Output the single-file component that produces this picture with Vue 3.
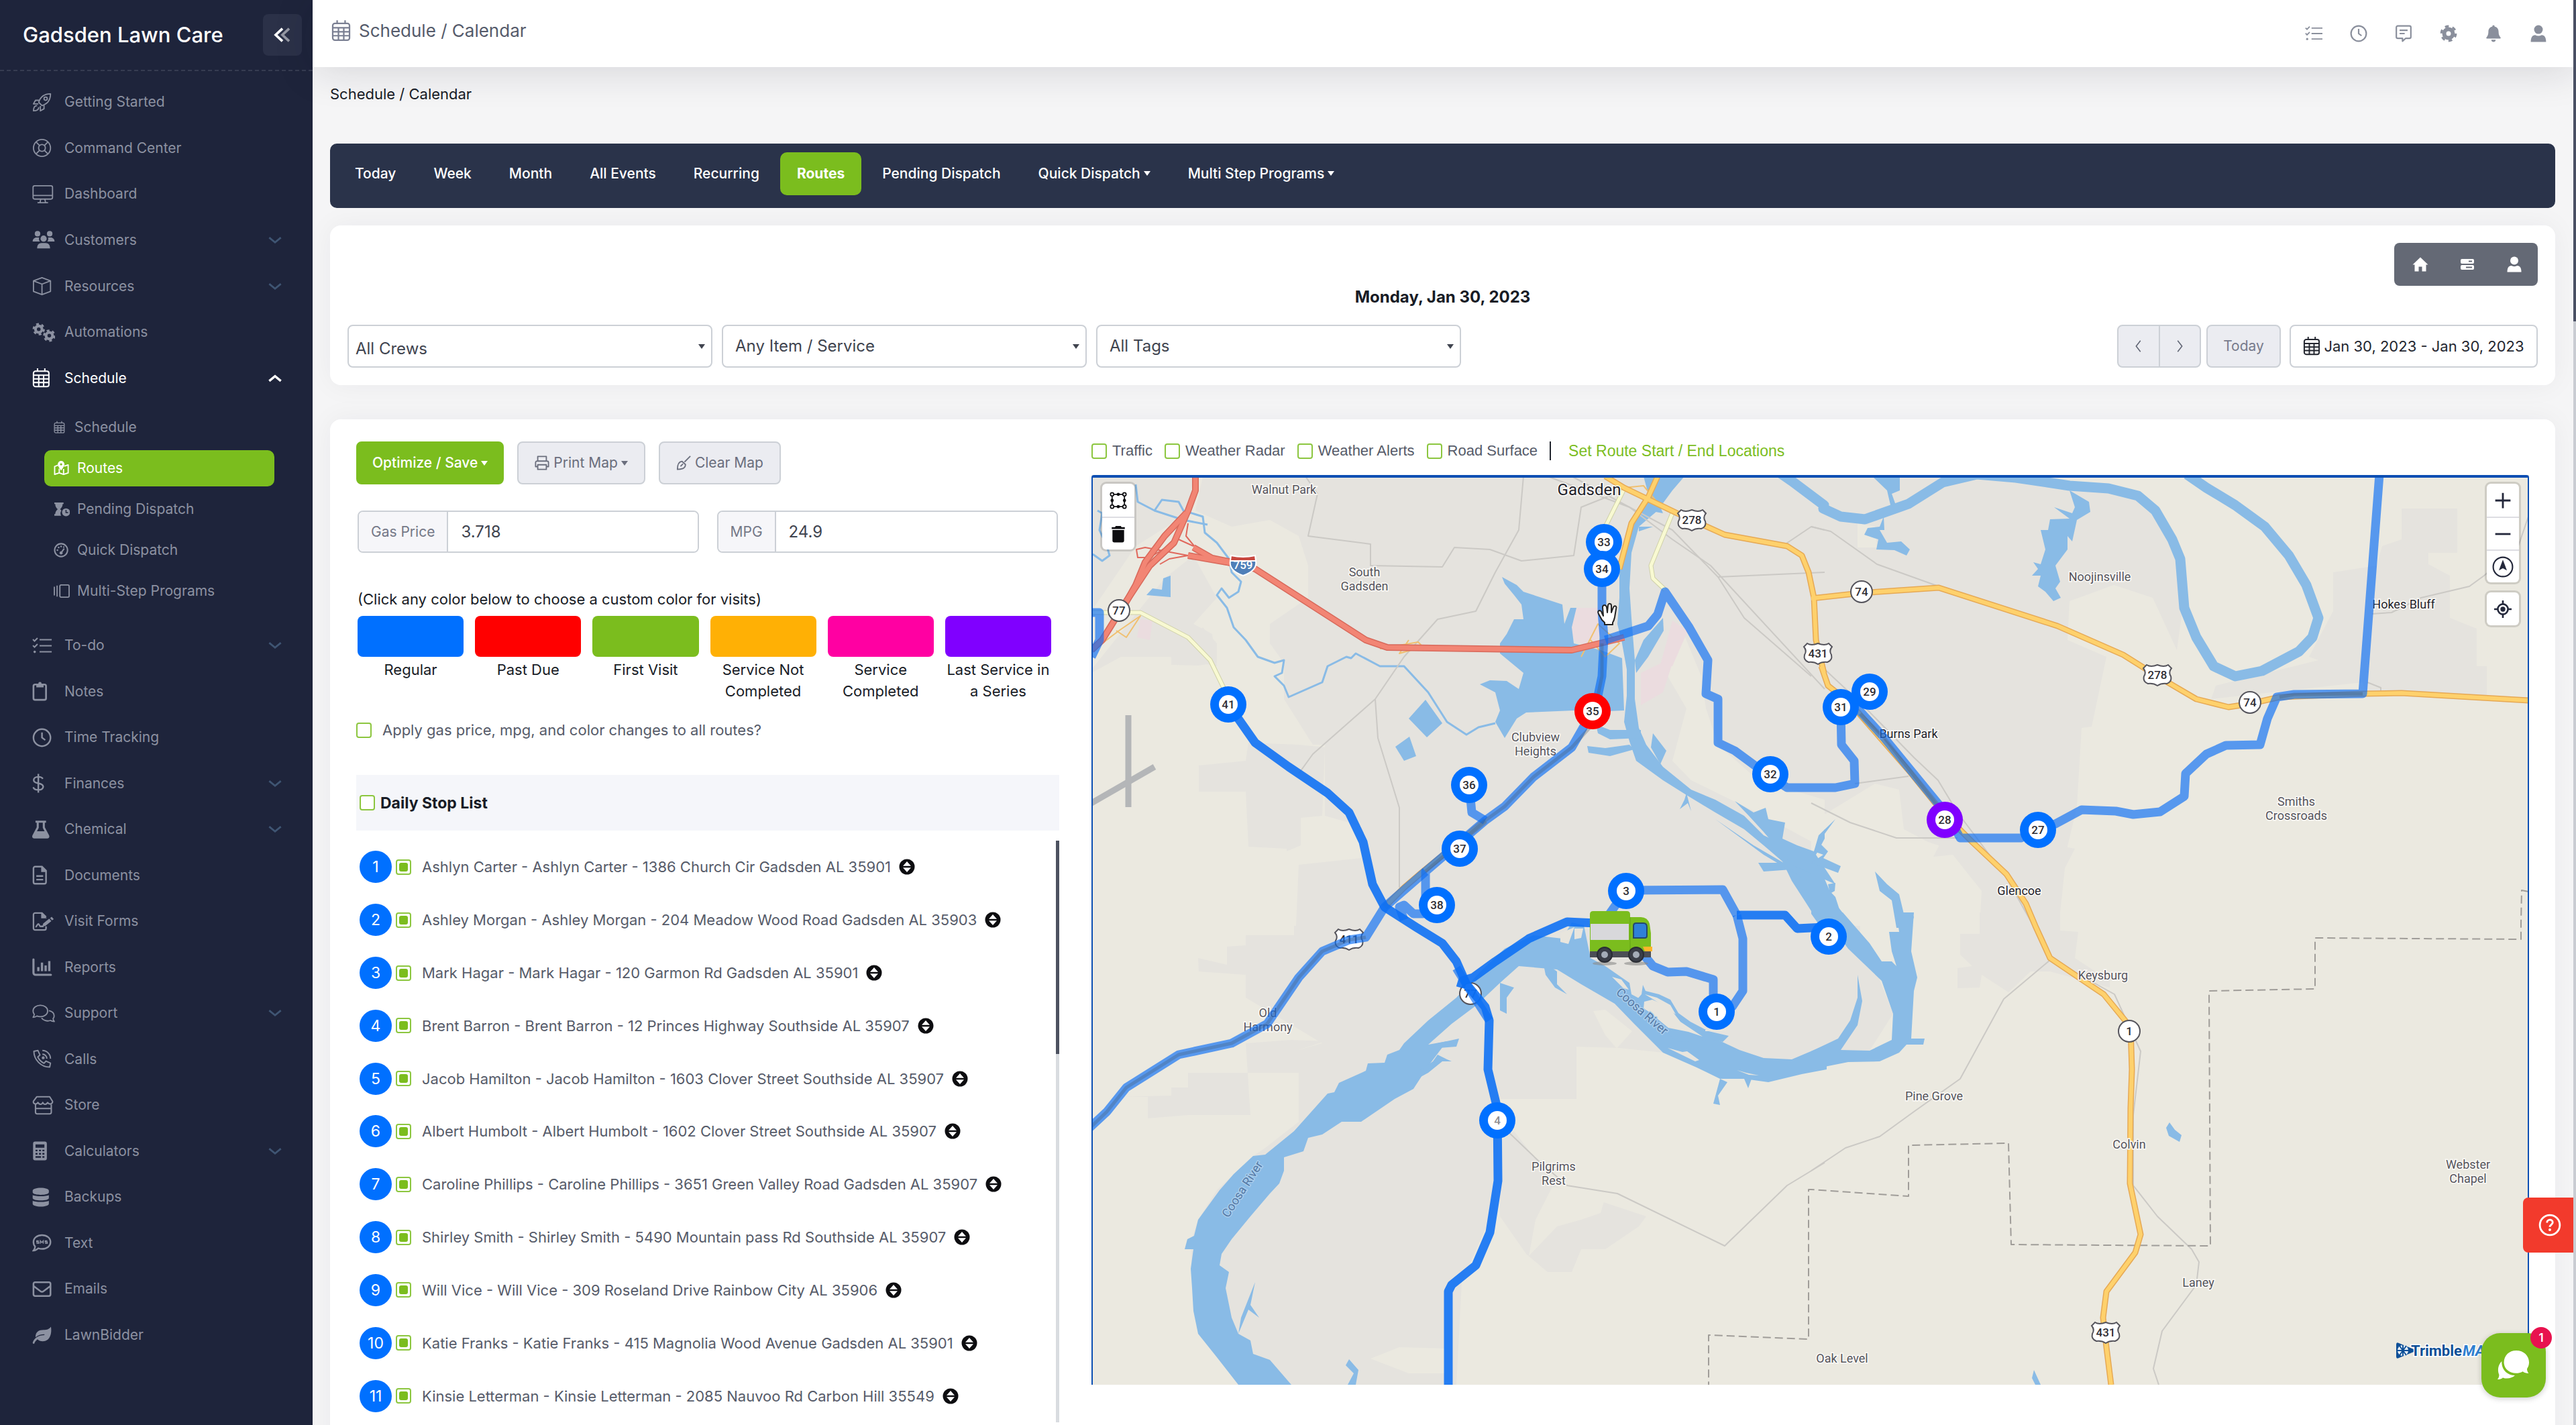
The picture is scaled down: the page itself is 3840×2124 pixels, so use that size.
<script setup>
import { ref } from 'vue'

const icons = {
  rocket: '<g fill="none" stroke="currentColor" stroke-width="1.5" stroke-linejoin="round"><path d="M8 12C10 5 15 1.500 22.500 1.500 22.500 9 19 14 12 16Z"/><circle cx="16.500" cy="7.500" r="2"/><path d="M8.500 9.500H4L1.500 14H7.500M14.500 15.500V20L10 22.500V16.500M6 16C3 16 1.500 18.500 1.500 22.500 5.500 22.500 8 21 8 18"/></g>',
  life: '<g fill="none" stroke="currentColor" stroke-width="1.500"><circle cx="12" cy="12" r="10.500"/><circle cx="12" cy="12" r="4.200"/><path d="M4.500 4.500 9 9M15 15l4.500 4.500M19.500 4.500 15 9M9 15l-4.500 4.500"/></g>',
  desktop: '<g fill="none" stroke="currentColor" stroke-width="1.500" stroke-linejoin="round"><rect x="1" y="1.500" width="24" height="16.500" rx="2"/><path d="M1 13.500h24M10.500 18l-1 4.500M15.500 18l1 4.500M6.500 22.500h13"/></g>',
  users: '<g fill="currentColor"><circle cx="6.500" cy="4.500" r="3.400"/><circle cx="21.500" cy="4.500" r="3.400"/><circle cx="14" cy="10.500" r="3.800"/><path d="M.5 14c0-3 2-5 5-5h3c-.6 2 0 4 1 5ZM27.500 14c0-3-2-5-5-5h-3c.6 2 0 4-1 5ZM6 22.500c0-4 2-6.500 5.500-6.500h5c3.500 0 5.500 2.500 5.500 6.500Z"/></g>',
  box: '<path d="M12 1.500 22.500 5.500V18.500L12 22.500 1.500 18.500V5.500ZM1.500 5.500 12 9.500 22.500 5.500M12 9.500V22.500" fill="none" stroke="currentColor" stroke-width="1.500" stroke-linejoin="round"/>',
  gears: '<g fill="none" stroke="currentColor"><circle cx="8" cy="8" r="4" stroke-width="3.400"/><circle cx="8" cy="8" r="6.400" stroke-width="2.400" stroke-dasharray="3.350 3.350"/><circle cx="21" cy="16" r="4" stroke-width="3.400"/><circle cx="21" cy="16" r="6.400" stroke-width="2.400" stroke-dasharray="3.350 3.350"/></g>',
  calendar: '<g fill="none" stroke="currentColor" stroke-width="1.700"><rect x="1.500" y="3.500" width="19" height="19" rx="2.500"/><path d="M1.500 8.500h19M1.500 13h19M1.500 17.500h19M8 8.500v14M14 8.500v14M6.500 0v4M15.500 0v4"/></g>',
  map: '<g fill="none" stroke="currentColor" stroke-width="2" stroke-linejoin="round"><path d="M7 7 1.500 9V22L9 19.500 16 22 23.500 19.500V6.500L17 8.500M9 12.500V19.500M16 13V22"/></g><path d="M12 0a5.500 5.500 0 0 1 5.500 5.500C17.500 9 12 15.500 12 15.500S6.500 9 6.500 5.500A5.500 5.500 0 0 1 12 0Z" fill="currentColor"/><circle cx="12" cy="5.500" r="1.800" fill="#7bbd1e"/>',
  hourglass: '<path d="M1 1h15v2.500h-1.500C14.500 8 12 10 10.500 12c.8.800 1.500 1.500 2 2.500A7.500 7.500 0 0 0 12 22.500H1V20h1.500c0-4 2-6 4-8-2-2-4-4-4-8.500H1Z" fill="currentColor"/><circle cx="20" cy="17" r="6.500" fill="currentColor"/><path d="M20 13v4.500h3.500" stroke="#1e243b" stroke-width="1.600" fill="none"/>',
  gauge: '<g fill="none" stroke="currentColor" stroke-width="2.200"><circle cx="12" cy="12" r="10.500"/><path d="M12 16.500 17 9.500"/></g><g fill="currentColor"><circle cx="12" cy="16.500" r="2.500"/><circle cx="6" cy="12" r="1.400"/><circle cx="8" cy="7.700" r="1.400"/><circle cx="12" cy="6" r="1.400"/><circle cx="16.300" cy="7" r="1.200"/></g>',
  steps: '<g fill="none" stroke="currentColor" stroke-width="2"><rect x="10" y="2" width="15" height="20" rx="2"/><path d="M1 5v14M5.500 3v18"/></g>',
  tasks: '<g fill="none" stroke="currentColor" stroke-width="1.700"><path d="M9 4.500h15M9 12h15M9 19.500h15M.8 4.200l2 2L6.500 2.500M.8 11.700l2 2L6.500 10"/></g><circle cx="3" cy="19.500" r="1.500" fill="currentColor"/>',
  clipboard: '<rect x="1.500" y="3.500" width="15.500" height="19" rx="2" fill="none" stroke="currentColor" stroke-width="2.200"/><path d="M5 2.500h2.500a2 2 0 0 1 4 0H14V7H5Z" fill="currentColor"/>',
  clock: '<g fill="none" stroke="currentColor" stroke-width="2"><circle cx="12" cy="12" r="10.500"/><path d="M12 5.500V12l4 3"/></g>',
  dollar: '<path d="M13 6.500C12 4.500 10 4 7.500 4 4 4 1.800 5.500 1.800 8S4 11.300 7.500 12s6 1.700 6 4.200S11 20.200 7.500 20.200 2 19 1.200 16.800M7.500 .5v23" fill="none" stroke="currentColor" stroke-width="2"/>',
  flask: '<path d="M4 1h13v2.500h-1.500V9l5.200 10c1 2-.2 4-2.200 4h-16C.5 23-.7 21 .3 19L5.500 9V3.500H4ZM8 3.500V10l-2.200 4h9.400L13 10V3.500Z" fill="currentColor" fill-rule="evenodd"/>',
  doc: '<path d="M1.500 3.500a2 2 0 0 1 2-2H12L17 6.500V20.500a2 2 0 0 1-2 2H3.500a2 2 0 0 1-2-2ZM5 13h8.500M5 17.500h8.500" fill="none" stroke="currentColor" stroke-width="2"/><path d="M11 1v7h7Z" fill="currentColor"/>',
  sign: '<path d="M17 18V20.500a2 2 0 0 1-2 2H3.500a2 2 0 0 1-2-2V3.500a2 2 0 0 1 2-2H12L17 6.500M4 18.500c2 0 2-3.500 3.500-3.500s1 3 2.500 3H14" fill="none" stroke="currentColor" stroke-width="1.900"/><path d="M11 1v7h7ZM12.500 18 13.500 14.500 21 8.500 23.500 11.500 16 17.500ZM22 7.800 24 6.200 26.500 9 24.500 10.600Z" fill="currentColor"/>',
  chart: '<path d="M1.500 2.500V19a2.500 2.500 0 0 0 2.500 2.500H23" fill="none" stroke="currentColor" stroke-width="2.600" stroke-linecap="round"/><path d="M7.500 12v5M12 6.500V17M16.500 10v7M21 4.500V17" stroke="currentColor" stroke-width="2.800"/>',
  chats: '<g fill="none" stroke="currentColor" stroke-width="1.500" stroke-linejoin="round"><path d="M10 2C15 2 19 5 19 9s-4 7-9 7c-1.500 0-3-.3-4.200-.8C4.500 16.200 3 16.800 1 16.800 2 15.500 2.500 14.500 2.500 13 1.500 11.800 1 10.500 1 9 1 5 5 2 10 2Z"/><path d="M20.500 8.500c4 .8 6.500 3.300 6.500 6.500 0 1.500-.5 2.500-1.300 3.500 0 1.500.6 2.500 1.500 3.500-2 0-3.500-.5-4.700-1.300-4.500 1.500-9 0-11-3.200"/></g>',
  phone: '<g fill="none" stroke="currentColor" stroke-width="1.600" stroke-linejoin="round"><path d="M2 2.500 7 1.500 9.500 7 6.800 9.500C8.500 13 11 15.500 14.500 17.200L17 14.500 22.500 17 21.500 22C11 22 2 13 2 2.500Z"/><path d="M12.500 1.500C18 1.500 22.500 6 22.500 11.500M12.500 6c3 0 5.500 2.500 5.500 5.500"/><circle cx="13.500" cy="10.500" r="1"/></g>',
  store: '<g fill="none" stroke="currentColor" stroke-width="1.700" stroke-linejoin="round"><path d="M5.500 1.500h16L25 7c.5 3-4 5-6 1.500-1.500 3-5 3-6 0-1 3-4.500 3-6 0C5 12 .5 10 1.500 7ZM4 11V20.500a2 2 0 0 0 2 2H21.500a2 2 0 0 0 2-2V11M4 16h19.500"/></g>',
  calc: '<path d="M3.500 .5h12a2.500 2.500 0 0 1 2.500 2.500v18a2.500 2.500 0 0 1-2.500 2.500h-12A2.500 2.500 0 0 1 1 21V3A2.500 2.500 0 0 1 3.500 .5ZM4 4v4h11V4ZM4 10.500v2h2.500v-2ZM8.300 10.500v2h2.500v-2ZM12.500 10.500v2H15v-2ZM4 14.500v2h2.500v-2ZM8.300 14.500v2h2.500v-2ZM12.500 14.500v2H15v-2ZM4 18.500v2h6.800v-2ZM12.500 18.500v2H15v-2Z" fill="currentColor" fill-rule="evenodd"/>',
  database: '<path d="M.5 4C.5 2 5 .5 10.500 .5S20.500 2 20.500 4V6c0 1.800-4.500 3-10 3S.5 7.800.5 6ZM.5 9.300c3 2 17 2 20 0V13c0 1.800-4.500 3-10 3S.5 14.800.5 13ZM.5 16.300c3 2 17 2 20 0V20c0 2-4.500 3.500-10 3.500S.5 22 .5 20Z" fill="currentColor"/>',
  sms: '<path d="M12 2.500C18 2.500 22.500 6 22.500 11S18 19.500 12 19.500c-1.700 0-3-.3-4.500-.8C5.500 20.500 3.500 21.500 1.500 21.500 3 19.500 3.500 18 3.500 16.500 2 15 1.500 13 1.500 11 1.500 6 6 2.500 12 2.500Z" fill="none" stroke="currentColor" stroke-width="2"/><path d="M8 9.500H5.500V11H8v1.700H5.200M10 13V9.500l1.800 2 1.800-2V13M18.500 9.500H16V11h2.500v1.700h-2.800" fill="none" stroke="currentColor" stroke-width="1.200"/>',
  mail: '<path d="M3.500 3.500h17a2 2 0 0 1 2 2v13a2 2 0 0 1-2 2h-17a2 2 0 0 1-2-2v-13a2 2 0 0 1 2-2ZM1.500 8l8.500 6.500c1.300 1 2.700 1 4 0L22.500 8" fill="none" stroke="currentColor" stroke-width="2.100"/>',
  leaf: '<path d="M23 2c1.500 8-1 18-10 18-3 0-5-.8-6.500-2.500C4.500 19 3 21 2.500 23 1.500 23.200.5 23 .5 22 2 16 8 12.500 15 12.500v-1.200C11 11.300 7 12.500 4 15 4 8.500 8 6 14 6 18.500 6 21 5 23 2Z" fill="currentColor"/>',
  note: '<g fill="none" stroke="currentColor" stroke-width="2" stroke-linejoin="round"><path d="M4 1.500h16a2 2 0 0 1 2 2v13a2 2 0 0 1-2 2h-5l-4.500 4v-4H4a2 2 0 0 1-2-2v-13a2 2 0 0 1 2-2Z"/><path d="M6.500 7.500h11M6.500 12h7"/></g>',
  gear: '<circle cx="12" cy="12" r="6" fill="none" stroke="currentColor" stroke-width="5.500"/><circle cx="12" cy="12" r="10" fill="none" stroke="currentColor" stroke-width="3" stroke-dasharray="5.240 5.240"/>',
  bell: '<path d="M12 0.500c1 0 1.500.7 1.500 1.700C17 3 19 5.500 19 9.500c0 4 1 6 2.500 7.500.8.900.3 2-.8 2H3.300c-1.100 0-1.600-1.100-.8-2C4 15.500 5 13.500 5 9.500 5 5.500 7 3 10.500 2.200 10.500 1.200 11 .5 12 .5ZM9 20.500h6c0 4-6 4-6 0Z" fill="currentColor"/>',
  user: '<circle cx="12" cy="6.500" r="6" fill="currentColor"/><path d="M1.500 23.500c0-6 2-9.500 6-9.500 3 1.500 6 1.500 9 0 4 0 6 3.500 6 9.500Z" fill="currentColor"/>',
  home: '<path d="M12 1.500 23.500 12.500H20.500V22.500H14.500V15.500H9.500V22.500H3.500V12.500H.5Z" fill="currentColor"/>',
  server: '<path d="M4 4h16a2 2 0 0 1 2 2v3a2 2 0 0 1-2 2H4a2 2 0 0 1-2-2V6a2 2 0 0 1 2-2ZM14 6.500v2h5v-2ZM4 13h16a2 2 0 0 1 2 2v3a2 2 0 0 1-2 2H4a2 2 0 0 1-2-2v-3a2 2 0 0 1 2-2ZM10 15.500v2h9v-2Z" fill="currentColor" fill-rule="evenodd"/>',
  printer: '<g fill="none" stroke="currentColor" stroke-width="2" stroke-linejoin="round"><path d="M5 9V1.500h14V9M5 18H1.500v-6.500A2.500 2.500 0 0 1 4 9h16a2.500 2.500 0 0 1 2.500 2.500V18H19M5 15h14v7.500H5Z"/></g>',
  brush: '<g fill="none" stroke="currentColor" stroke-width="2" stroke-linejoin="round"><path d="M23 1 13.500 10.500M9.500 9.500 15 14.500C15.500 19 12 22.500 2 22.500 2 17 3.500 10 9.500 9.500ZM7 17.500 11 13.500"/></g>',
  down: '<path d="M4 8.500 12 15 20 8.500" fill="none" stroke="currentColor" stroke-width="2.600"/>',
  up: '<path d="M4 15.500 12 9 20 15.500" fill="none" stroke="currentColor" stroke-width="3.200"/>',
  left: '<path d="M15 3 8 12 15 21" fill="none" stroke="currentColor" stroke-width="1.700"/>',
  right: '<path d="M9 3 16 12 9 21" fill="none" stroke="currentColor" stroke-width="1.700"/>',
  collapse: '<path d="M12 4.500 4 12 12 19.500" fill="none" stroke="currentColor" stroke-width="3"/><path d="M20 4.500 12 12 20 19.500" fill="none" stroke="currentColor" stroke-width="3" opacity=".5"/>',
  sort: '<circle cx="12" cy="12" r="11.500" fill="#0d0d10"/><path d="M12 4 18 10.800H6ZM12 20 18 13.200H6Z" fill="#fff"/>',
  select: '<g fill="none" stroke="#0d0d10" stroke-width="1.600"><path d="M6 3.500h12M6 20.500h12M3.500 6v12M20.500 6v12"/><circle cx="3.500" cy="3.500" r="2.300" fill="#fff"/><circle cx="20.500" cy="3.500" r="2.300" fill="#fff"/><circle cx="3.500" cy="20.500" r="2.300" fill="#fff"/><circle cx="20.500" cy="20.500" r="2.300" fill="#fff"/></g><g fill="#0d0d10"><circle cx="12" cy="3.500" r="2.200"/><circle cx="12" cy="20.500" r="2.200"/><circle cx="3.500" cy="12" r="2.200"/><circle cx="20.500" cy="12" r="2.200"/></g>',
  trash: '<path d="M8.500 1h7l1 1.500H21V5H3V2.500h4.500ZM4 6.500h16V21a2.500 2.500 0 0 1-2.500 2.500h-11A2.500 2.500 0 0 1 4 21Z" fill="#0d0d10"/>',
  plus: '<path d="M12 1.500v21M1.500 12h21" stroke="#23273a" stroke-width="2.600"/>',
  minus: '<path d="M1.500 12h21" stroke="#23273a" stroke-width="2.600"/>',
  compass: '<circle cx="12" cy="12" r="10.800" fill="none" stroke="#23273a" stroke-width="1.600"/><path d="M12 4 16.500 16 12 13.500 7.500 16Z" fill="#23273a"/>',
  locate: '<circle cx="12" cy="12" r="7" fill="none" stroke="#23273a" stroke-width="2.400"/><circle cx="12" cy="12" r="3.400" fill="#23273a"/><path d="M12 0v5M12 19v5M0 12h5M19 12h5" stroke="#23273a" stroke-width="2.400"/>',
  chat: '<path d="M14 1C19.500 1 23.500 4.800 23.500 9.800c0 2-.6 3.400-1.500 4.800 0 1.300.4 2.400 1.200 3.400-1.800 0-3.200-.5-4.400-1.400-6 3.400-14 0-14-6.800C4.800 4.800 8.500 1 14 1Z" fill="#fff"/><path d="M3.200 9C2.700 15 7 19.500 13 19.500c-2 2-6 3-9 1.700-1 .9-2.400 1.300-4 1.300.9-1.100 1.200-2.200 1.200-3.500C-.3 15.500.5 11.500 3.200 9Z" fill="#fff"/>',
  help: '<circle cx="12" cy="12" r="10.500" fill="none" stroke="#fff" stroke-width="2"/><path d="M9 9.500c0-4 6-4 6-.3 0 2.300-3 2.300-3 4.800" fill="none" stroke="#fff" stroke-width="2"/><circle cx="12" cy="17" r="1.400" fill="#fff"/>',
}

const topMenu = [
  ['rocket', 'Getting Started'], ['life', 'Command Center'], ['desktop', 'Dashboard'],
  ['users', 'Customers', 'down'], ['box', 'Resources', 'down'], ['gears', 'Automations'],
  ['calendar', 'Schedule', 'up'],
]
const subMenu = [
  ['calendar', 'Schedule'], ['map', 'Routes'], ['hourglass', 'Pending Dispatch'],
  ['gauge', 'Quick Dispatch'], ['steps', 'Multi-Step Programs'],
]
const lowerMenu = [
  ['tasks', 'To-do', 'down'], ['clipboard', 'Notes'], ['clock', 'Time Tracking'],
  ['dollar', 'Finances', 'down'], ['flask', 'Chemical', 'down'], ['doc', 'Documents'],
  ['sign', 'Visit Forms'], ['chart', 'Reports'], ['chats', 'Support', 'down'],
  ['phone', 'Calls'], ['store', 'Store'], ['calc', 'Calculators', 'down'],
  ['database', 'Backups'], ['sms', 'Text'], ['mail', 'Emails'], ['leaf', 'LawnBidder'],
]
const topIcons = [
  ['tasks', 'Tasks'], ['clock', 'Time clock'], ['note', 'Messages'],
  ['gear', 'Settings'], ['bell', 'Notifications'], ['user', 'Account'],
]
const tabs = [
  ['Today'], ['Week'], ['Month'], ['All Events'], ['Recurring'], ['Routes'],
  ['Pending Dispatch'], ['Quick Dispatch', true], ['Multi Step Programs', true],
]
const swatches = ref([
  ['Regular', '#0070ff'], ['Past Due', '#ff0000'], ['First Visit', '#7bbd1e'],
  ['Service Not Completed', '#ffb005'], ['Service Completed', '#ff00a2'],
  ['Last Service in a Series', '#8000ff'],
])
const stops = ref([
  'Ashlyn Carter - Ashlyn Carter - 1386 Church Cir Gadsden AL 35901',
  'Ashley Morgan - Ashley Morgan - 204 Meadow Wood Road Gadsden AL 35903',
  'Mark Hagar - Mark Hagar - 120 Garmon Rd Gadsden AL 35901',
  'Brent Barron - Brent Barron - 12 Princes Highway Southside AL 35907',
  'Jacob Hamilton - Jacob Hamilton - 1603 Clover Street Southside AL 35907',
  'Albert Humbolt - Albert Humbolt - 1602 Clover Street Southside AL 35907',
  'Caroline Phillips - Caroline Phillips - 3651 Green Valley Road Gadsden AL 35907',
  'Shirley Smith - Shirley Smith - 5490 Mountain pass Rd Southside AL 35907',
  'Will Vice - Will Vice - 309 Roseland Drive Rainbow City AL 35906',
  'Katie Franks - Katie Franks - 415 Magnolia Wood Avenue Gadsden AL 35901',
  'Kinsie Letterman - Kinsie Letterman - 2085 Nauvoo Rd Carbon Hill 35549',
].map((text) => ({ text, on: true })))
const layers = ['Traffic', 'Weather Radar', 'Weather Alerts', 'Road Surface']
const gasPrice = ref('3.718')
const mpg = ref('24.9')

// Map geometry is stored per quadrant; each quadrant has its own grid and
// is projected onto the shared map plane here.
const quadrant = (ox, oy, sx, sy) => (s) => {
  const n = s.trim().split(/\s+/).map(Number)
  const out = []
  for (let i = 0; i < n.length; i += 2) out.push(`${Math.round(ox + n[i] * sx)},${Math.round(oy + n[i + 1] * sy)}`)
  return out.join(' ')
}
const nw = quadrant(1600, 620, 0.7143, 0.4847)
const ne = quadrant(2700, 620, 0.727, 0.4847)
const sw = quadrant(1600, 1360, 0.7143, 0.4872)
const se = quadrant(2700, 1360, 0.727, 0.4872)
const bend = quadrant(2180, 1260, 0.3333, 0.3333)
const at = (q, x, y) => q(`${x} ${y}`).split(',').map(Number)

const light = [
  nw('270 186 255 290 330 340 410 320 470 370 490 460 490 560 410 640 410 700 440 760 440 870 500 1010 525 1010 525 1230 600 1260 600 1360 470 1380 465 1568 38 1568 38 790 100 740 200 740 300 770 290 670 250 640 300 560 250 430 190 500 38 780 38 600 130 400 240 300 250 186'),
  ne('330 186 1471 186 1471 1568 508 1568 480 1420 520 1360 545 1200 555 960 575 955 605 740 525 690 530 570 620 520 700 560 750 720 760 600 765 440 740 370 700 280 640 240'),
  ne('0 1250 130 1130 180 1150 190 1270 240 1310 300 1340 350 1430 355 1568 0 1568'),
  nw('1265 640 1310 800 1320 900 1345 1010 1430 1120 1568 1180 1568 1330 1440 1230 1290 1120 1250 1060 1280 900 1240 800'),
  se('100 0 1471 0 1471 1445 0 1445 0 440 100 400'),
  sw('38 0 460 0 460 70 360 70 360 260 520 400 470 420 470 640 400 720 375 745 300 850 260 940 245 1010 250 1200 260 1290 345 1445 38 1445'),
  sw('1050 410 1140 415 1230 430 1400 510 1568 480 1568 1445 800 1445 810 1130 880 900 890 570 1050 570'),
  sw('620 1365 680 1330 775 1335 775 1410 700 1410'),
  bend('585 740 640 735 760 830 690 910 640 850'),
  ne('95 330 130 340 135 405 95 405'),
]
const urban = [
  nw('262 1075 360 1060 365 1005 470 1010 525 1020 520 1230 475 1235 475 1320 445 1340 445 1330 365 1325 360 1155 262 1155'),
  nw('205 740 270 650 300 700 300 760 260 768 205 765'),
  ne('1070 480 1160 460 1170 400 1210 380 1210 285 1325 285 1325 420 1265 420 1265 455 1310 490 1310 620 1365 655 1365 770 1385 770 1385 860 1140 860 1130 820 820 870 830 830 1040 750 1020 740 1070 600'),
  ne('270 1300 430 1300 540 1330 520 1390 508 1568 345 1568 350 1460 290 1350 250 1355'),
  se('345 0 510 0 510 55 548 60 540 140 612 210 612 230 490 180 450 180 405 245 350 190 345 230 300 232 300 170 330 165 305 130 305 65 345 65'),
  se('0 0 60 0 130 170 168 310 120 422 60 420 0 425'),
  sw('100 565 205 560 205 535 240 535 240 490 390 490 470 490 470 420 525 395 455 390 360 400 370 620 240 620 155 630 155 565'),
  sw('260 140 320 160 320 105 360 100 360 190 262 180'),
  sw('890 700 920 670 1010 840 1195 930 1180 960 1110 1030 1060 1030 1040 1100 990 1100 945 1045 890 930'),
]
const islands = [
  sw('965 940 1000 840 1110 870 1100 920 1060 940 1010 960 950 1050'),
]
const sandbars = [
  bend('670 588 710 600 745 645 720 640'),
  bend('815 665 870 680 930 715 955 755 920 735 870 700'),
  bend('812 700 850 690 920 720 975 790 1075 855 1010 835 920 815 835 745 810 730'),
  bend('918 905 985 925 1005 920 1060 960 1040 965'),
  bend('1228 1006 1270 1018 1325 1030 1280 1025'),
  bend('437 392 500 365 475 440 437 432'), bend('502 420 502 372 540 372 530 415'),
  bend('1085 826 1180 826 1180 832 1085 832'),
]
const park = [
  nw('1050 590 1100 590 1100 670 1085 715 1045 690 1038 640'),
  nw('1250 630 1282 660 1250 770 1225 765'),
  nw('1185 790 1255 740 1230 850 1185 890'),
  nw('140 625 165 630 160 690 133 680'),
]
const water = [
  nw('1275 186 1190 186 1200 240 1180 280 1160 330 1150 400 1140 470 1140 560 1135 640 1145 700 1155 780 1155 860 1150 940 1160 1000 1175 1060 1230 1120 1280 1165 1340 1220 1400 1270 1440 1320 1480 1370 1500 1430 1530 1500 1560 1568 1610 1568 1590 1480 1540 1400 1510 1340 1440 1290 1400 1230 1340 1180 1290 1150 1230 1080 1195 1010 1180 960 1172 870 1172 750 1165 620 1160 530 1165 420 1180 340 1220 290 1250 230'),
  nw('1172 750 1190 690 1230 620 1232 660 1200 740 1175 790'),
  nw('895 495 925 520 940 540 1020 580 1025 640 1038 590 1050 590 1040 650 1045 700 1100 720 1145 745 1150 905 1080 910 1045 905 945 912 925 930 900 990 880 940 890 905 880 850 848 825 870 812 905 815 930 840 940 790 890 730 890 700 905 670 920 625 940 625 935 580 920 550 900 515'),
  nw('735 872 770 945 738 988 700 930'), nw('702 987 716 1047 690 1060 672 1018'),
  nw('203 492 203 557 153 550 165 530 185 535 187 500'),
  nw('1090 950 1120 965 1185 965 1185 990 1120 995 1095 975'),
  nw('1072 1015 1110 1022 1160 1010 1170 1025 1120 1045 1075 1035'),
  nw('1210 975 1238 1030 1225 1070 1205 1020'),
  nw('1180 340 1210 340 1180 355'), nw('1200 290 1220 260 1230 300'),
  nw('1380 1185 1420 1220 1445 1205 1450 1240 1485 1250 1480 1300 1510 1320 1545 1340 1568 1270 1568 1300 1550 1350 1590 1440 1500 1380 1440 1280 1410 1230'),
  nw('1280 1160 1290 1215 1282 1190 1265 1210 1275 1180'), nw('1340 1240 1420 1320 1490 1380 1520 1420 1440 1350'),
  nw('1430 1375 1500 1375 1500 1395 1440 1400'),
  ne('530 230 570 265 572 295 545 320 535 385 525 370 525 410 500 460 510 510 500 530 512 560 497 570 480 540 465 525 470 490 452 490 465 470 455 450 470 455 480 410 470 350 485 350 490 318 530 315 498 280 535 300 540 280'),
  ne('125 186 182 190 182 230 165 240 178 290 165 290 155 230'),
  ne('148 310 150 350 140 350 155 390 185 385 202 410 195 430 170 412 133 410 137 380 108 365 115 345 140 340'),
  ne('50 1240 15 1310 35 1340 25 1360 60 1385 55 1405 0 1375 25 1350 5 1340 15 1290'),
  ne('130 1400 155 1440 180 1470 190 1530 210 1540 205 1575 175 1575 165 1490 140 1460'),
  ne('0 1400 20 1400 50 1500 90 1575 20 1575 0 1530'), ne('35 1440 50 1435 48 1460 38 1468'),
  se('10 0 65 0 120 95 145 150 165 150 175 165 165 120 160 60 180 60 175 0 210 0 205 120 218 200 210 240 205 385 232 385 230 405 195 405 180 430 140 455 75 458 0 480 0 425 55 385 80 330 95 260 95 190 105 270 95 345 60 420 120 422 165 390 168 310 145 210 75 110 40 40'),
  se('735 642 745 665 759 682 755 701 733 683 727 658'), se('457 1400 470 1445 460 1445 453 1425'),
  sw('900 110 960 70 1020 80 1040 30 1065 40 1080 140 1110 165 1160 215 1165 250 1240 310 1300 360 1390 420 1440 445 1500 450 1572 405 1572 480 1520 495 1450 520 1400 510 1350 510 1300 475 1230 430 1170 340 1130 280 1060 220 1010 175 930 165 890 215 840 285 790 340 740 405 780 395 740 470 710 540 670 570 600 640 560 640 520 680 490 690 480 730 440 750 440 790 430 830 410 860 370 930 330 1000 310 1045 305 1080 325 1100 318 1150 330 1240 345 1290 370 1310 375 1350 410 1370 455 1445 345 1445 300 1360 260 1290 250 1220 248 1150 245 1090 250 1030 232 1030 238 1000 252 990 260 940 305 850 335 800 375 745 400 740 460 670 530 555 545 550 555 522 610 485 615 462 650 460 655 435 680 420 690 400 740 330 800 260 850 180'),
  sw('380 1130 370 1200 388 1240 365 1215 345 1290 350 1240'),
  sw('575 1368 595 1400 590 1445 572 1445 585 1410 568 1385'),
  sw('805 385 800 410 765 415 740 430 760 400'),
  sw('790 455 770 455 740 490 710 515 715 490 750 455 760 435 780 450'),
  sw('890 215 920 230 905 260 905 310 890 300 890 260'),
  sw('980 150 1010 180 1010 220 1030 250 1005 230 985 190'),
  sw('1350 510 1365 520 1345 560 1350 590 1335 585'), sw('1400 510 1415 510 1408 538'),
  bend('808 625 820 650 880 665 930 690 965 750 1020 790 1100 830 1190 852 1165 878 1130 870 960 880 800 730 780 690 800 665'),
]
const bigRiver = [nw('1440 140 1500 200 1566 275'), ne('25 285 60 310 110 318 200 270 270 205 340 180 420 190 530 215 610 222 670 245 705 290 740 380 757 440 765 590 790 680 825 770 870 800 925 785 1000 725 1028 680 1040 620 1015 520 980 430 930 340 870 275 810 220 770 180')].join(' ')
const streams = [
  nw('130 210 135 265 170 290 185 258 220 265 230 290 270 310 275 360 300 390 325 440 330 480 350 510 345 540 325 560 310 530 300 550 320 590 335 650 360 690 385 740 420 760 440 750 435 790 420 800 440 830 450 865 520 820 530 770 570 740 580 745 590 730 640 770 690 770 740 850 780 940 820 980 845 958 880 945'),
  nw('50 290 60 300 55 350 70 400 75 430 60 445 40 425'), nw('170 290 230 320 280 335'),
]
const minorRoads = [
  nw('485 186 510 240 490 370 620 395 620 460 770 465 795 405 870 410 935 445 1045 430 1060 280 1130 240'),
  nw('940 186 930 350 880 480 840 600 760 625 690 740 630 870 500 1040 470 1100'),
  nw('630 870 635 990 680 1205 680 1450'), nw('990 186 1160 280 1250 380 1330 460 1568 840'),
  nw('1040 186 1250 350 1345 495 1400 620 1540 800'), nw('1345 495 1568 480'), nw('1480 400 1540 340 1568 350'),
  ne('0 340 40 355 135 455 262 525'), ne('0 740 100 880 210 1050 260 1120 300 1220 400 1420 455 1568'),
  ne('0 1190 80 1250 175 1297 300 1297'), ne('90 1130 200 1108'),
  se('490 145 395 265 305 510 210 610 140 685 70 720 0 790'),
  sw('900 660 970 760 1030 835 1135 860 1360 1020 1490 835 1568 765'),
  se('445 0 490 140 560 200 622 250 675 425 660 620 660 835 710 930 780 1030 795 1070 790 1140 720 1280 702 1395 712 1445'),
  ne('1470 310 1450 400 1380 490 1350 525 1250 560 1190 605 1150 608'), ne('1140 820 1168 835 1168 850'),
]
const boundaries = [
  [ne('1471 1462 1457 1458 1455 1560'), se('1455 40 1455 82 1033 78 1033 235 815 241 819 1020 410 1017 405 706 200 713 200 868 0 848'), sw('1535 848 1535 1305 1326 1294 1326 1445')].join(' '),
]
const paleRoads = [
  nw('1150 225 1110 340'), nw('1250 300 1205 460 1210 500 1235 535'), nw('38 605 140 605 240 680 285 750 315 840'),
]
const ramps = [
  nw('60 700 95 660 140 615 110 680 90 660'), nw('640 715 720 695 730 710 680 730 700 690'), nw('1060 740 1095 640 1140 700 1110 740 1080 690'),
  nw('1150 220 1190 215 1215 260 1180 250'),
]
const yellowRoads = [
  nw('1110 186 1150 220 1260 300 1360 365 1490 400 1520 430 1535 480 1545 560 1550 690 1566 790'),
  nw('1220 186 1200 250 1165 330 1140 470'),
  [ne('20 770 35 830 60 860 95 910 200 1090 270 1220 330 1310 400 1410 440 1500 460 1568'), se('490 140 600 250 655 350 658 480 655 600 653 830 675 985 665 1040 605 1160 598 1240 605 1330 615 1445')].join(' '),
  ne('0 562 100 545 262 528 505 645 640 735 710 800 790 870 855 895 900 885 960 865 1130 855 1210 852 1471 875'),
  nw('860 1245 730 1400 690 1450 650 1510'),
]
const redRoads = [
  nw('255 186 255 230 240 290 210 390 160 460 110 570 60 690 38 720'), nw('235 300 190 370 150 450 130 520 100 600'),
  nw('240 430 320 450 380 470 610 690 655 712 1040 720 1110 695 1150 680'), nw('250 405 290 438 330 450'),
]
const redRamps = [nw('240 330 235 370 255 405'), nw('240 430 200 440 180 455'), nw('240 430 150 405 132 410 135 435 160 435 220 380 250 400')]
const routes = [
  nw('1154 1458 1355 1456 1385 1535'), sw('1385 8 1397 80 1397 240 1375 290 1343 304'),
  sw('1190 130 1210 165 1240 182 1280 180 1335 205 1335 250 1343 290'), nw('1154 1458 1110 1550'),
  nw('1103 470 1103 600 1108 680 1103 800 1095 860 1083 907'),
  [nw('1110 690 1200 645 1220 610 1235 540 1285 650 1325 750 1320 855 1345 870 1345 1005 1380 1030 1455 1110 1490 1142'), ne('50 1142 90 1130 88 1060 62 1010 61 900')].join(' '),
  nw('1083 907 1040 1020 960 1110 900 1200 860 1245 735 1400 735 1490 759 1505'),
  nw('826 1135 832 1220 860 1245'), nw('759 1505 730 1530 710 1530 690 1505 680 1510 690 1550'),
  ne('61 895 95 900 150 990 280 1230 305 1297 430 1297 465 1273'),
  ne('465 1273 500 1255 555 1212 625 1215 660 1225 715 1217 765 1170 768 1100 810 1040 850 1012 920 1010 935 930 955 865 990 857 1130 855 1165 180'),
  [nw('735 1400 650 1510'), sw('610 75 576 85 520 120 470 200 405 340 330 400 220 435 110 535 70 610 30 665')].join(' '),
  nw('30 605 55 605 55 690 38 740'), ne('61 895 118 848'), sw('868 330 850 290 800 170'),
]
const mainRoutes = [
  [nw('323 887 380 1005 450 1080 530 1160 575 1220 605 1310 625 1440 650 1510'), sw('715 45 770 95 800 150 820 220 860 290 868 330 865 480 885 600 886 820 870 980 840 1080 790 1140 783 1160 783 1455')].join(' '),
  sw('808 230 812 210 835 200 880 150 950 80 1030 28 1090 32'),
  sw('1385 8 1485 8 1510 50 1568 45'),
]
const blue = '#0070ff'
const markers = [
  [nw, 1108, 388, '33'], [nw, 1103, 470, '34'], [nw, 1083, 907, '35', '#ff0000'], [nw, 323, 887, '41'],
  [nw, 826, 1135, '36'], [nw, 806, 1330, '37'], [nw, 759, 1505, '38'], [nw, 1154, 1460, '3'],
  [nw, 1455, 1102, '32'], [ne, 120, 847, '29'], [ne, 61, 895, '31'], [ne, 274, 1241, '28', '#8000ff'],
  [ne, 465, 1273, '27'], [se, 36, 73, '2'], [sw, 1343, 304, '1'], [sw, 885, 636, '4'],
].map(([q, x, y, n, c]) => { const p = at(q, x, y); return { x: p[0], y: p[1], n, c: c || blue } })
const shields = [
  [nw, 1291, 320, '278', 'us'], [ne, 710, 797, '278', 'us'], [nw, 1554, 730, '431', 'us'], [se, 604, 1285, '431', 'us'],
  [sw, 576, 83, '411', 'us'], [ne, 103, 541, '74', 'st'], [ne, 899, 881, '74', 'st'], [nw, 95, 598, '77', 'st'],
  [sw, 829, 248, '77', 'st'], [se, 652, 363, '1', 'st'], [nw, 354, 458, '759', 'is'],
].map(([q, x, y, n, k]) => { const p = at(q, x, y); return { x: p[0], y: p[1], n, k } })
const labels = [
  [nw, 440, 226, ['Walnut Park']], [nw, 1076, 232, ['Gadsden'], 'city'], [nw, 608, 480, ['South', 'Gadsden']],
  [nw, 965, 989, ['Clubview', 'Heights']], [ne, 592, 496, ['Noojinsville']], [ne, 1214, 579, ['Hokes Bluff'], 'town'],
  [ne, 199, 977, ['Burns Park'], 'town'], [ne, 995, 1186, ['Smiths', 'Crossroads']], [ne, 426, 1461, ['Glencoe'], 'town'],
  [se, 599, 193, ['Keysburg']], [se, 252, 562, ['Pine Grove']], [se, 652, 711, ['Colvin']],
  [se, 1346, 772, ['Webster', 'Chapel']], [se, 794, 1134, ['Laney']], [se, 63, 1364, ['Oak Level']],
  [sw, 1002, 778, ['Pilgrims', 'Rest']], [sw, 406, 308, ['Old', 'Harmony']],
].map(([q, x, y, lines, k]) => { const p = at(q, x, y); return { x: p[0], y: p[1], lines, k } })
</script>

<template>
  <div class="app">
    <aside class="sidebar">
      <div class="brand">
        <span class="brand-name">Gadsden Lawn Care</span>
        <button class="collapse" aria-label="Collapse menu"><svg viewBox="0 0 24 24" v-html="icons.collapse"></svg></button>
      </div>
      <nav>
        <ul class="menu menu-top">
          <li v-for="m in topMenu" :key="m[1]">
            <a href="#" :class="{ open: m[2] === 'up' }">
              <svg class="mi" viewBox="0 0 28 24" v-html="icons[m[0]]"></svg><span>{{ m[1] }}</span>
              <svg v-if="m[2]" class="chev" viewBox="0 0 24 24" v-html="icons[m[2]]"></svg>
            </a>
          </li>
        </ul>
        <ul class="submenu">
          <li v-for="m in subMenu" :key="m[1]">
            <a href="#" :class="{ active: m[1] === 'Routes' }">
              <svg :class="{ narrow: m[0] === 'calendar' }" viewBox="0 0 26 24" v-html="icons[m[0]]"></svg><span>{{ m[1] }}</span>
            </a>
          </li>
        </ul>
        <ul class="menu menu-lower">
          <li v-for="m in lowerMenu" :key="m[1]">
            <a href="#">
              <svg class="mi" viewBox="0 0 28 24" v-html="icons[m[0]]"></svg><span>{{ m[1] }}</span>
              <svg v-if="m[2]" class="chev" viewBox="0 0 24 24" v-html="icons[m[2]]"></svg>
            </a>
          </li>
        </ul>
      </nav>
    </aside>

    <main class="main">
      <header class="topbar">
        <svg class="top-cal" viewBox="0 0 22 24" v-html="icons.calendar"></svg>
        <h1>Schedule / Calendar</h1>
        <div class="top-actions">
          <button v-for="i in topIcons" :key="i[0]" :aria-label="i[1]"><svg viewBox="0 0 24 24" v-html="icons[i[0]]"></svg></button>
        </div>
      </header>

      <div class="content">
        <p class="crumb">Schedule / Calendar</p>
        <nav class="tabs">
          <a v-for="t in tabs" :key="t[0]" href="#" :class="{ active: t[0] === 'Routes' }">{{ t[0] }}<i v-if="t[1]" class="caret"></i></a>
        </nav>

        <section class="card filters">
          <div class="view-row">
            <div class="view-group">
              <button aria-label="Home"><svg viewBox="0 0 24 24" v-html="icons.home"></svg></button>
              <button aria-label="List"><svg viewBox="0 0 24 24" v-html="icons.server"></svg></button>
              <button aria-label="Crew"><svg viewBox="0 0 24 24" v-html="icons.user"></svg></button>
            </div>
          </div>
          <h2>Monday, Jan 30, 2023</h2>
          <div class="filter-row">
            <div class="select native"><select aria-label="Crews"><option>All Crews</option></select><i class="caret"></i></div>
            <div class="select"><select aria-label="Item or service"><option>Any Item / Service</option></select><i class="caret"></i></div>
            <div class="select"><select aria-label="Tags"><option>All Tags</option></select><i class="caret"></i></div>
            <div class="pager">
              <button aria-label="Previous"><svg viewBox="0 0 24 24" v-html="icons.left"></svg></button>
              <button aria-label="Next"><svg viewBox="0 0 24 24" v-html="icons.right"></svg></button>
            </div>
            <button class="today">Today</button>
            <button class="range"><svg viewBox="0 0 22 24" v-html="icons.calendar"></svg>Jan 30, 2023 - Jan 30, 2023</button>
          </div>
        </section>

        <section class="card planner">
          <div class="side">
            <div class="actions">
              <button class="btn green">Optimize / Save<i class="caret"></i></button>
              <button class="btn"><svg viewBox="0 0 24 24" v-html="icons.printer"></svg>Print Map<i class="caret"></i></button>
              <button class="btn"><svg viewBox="0 0 24 24" v-html="icons.brush"></svg>Clear Map</button>
            </div>
            <div class="fields">
              <div class="field"><label for="gas">Gas Price</label><input id="gas" v-model="gasPrice" type="text"></div>
              <div class="field"><label for="mpg">MPG</label><input id="mpg" v-model="mpg" type="text"></div>
            </div>
            <p class="hint">(Click any color below to choose a custom color for visits)</p>
            <div class="swatches">
              <label v-for="s in swatches" :key="s[0]"><input v-model="s[1]" type="color"><span>{{ s[0] }}</span></label>
            </div>
            <label class="apply"><input type="checkbox"><span>Apply gas price, mpg, and color changes to all routes?</span></label>
            <label class="list-head"><input type="checkbox"><span>Daily Stop List</span></label>
            <div class="list">
              <ol>
                <li v-for="(s, i) in stops" :key="i">
                  <span class="num">{{ i + 1 }}</span>
                  <label><input v-model="s.on" type="checkbox"><span>{{ s.text }}</span></label>
                  <svg viewBox="0 0 24 24" v-html="icons.sort"></svg>
                </li>
              </ol>
              <div class="bar"><div class="thumb"></div></div>
            </div>
          </div>

          <div class="map-side">
            <div class="layers">
              <label v-for="l in layers" :key="l"><input type="checkbox"><span>{{ l }}</span></label>
              <i class="sep"></i>
              <a href="#">Set Route Start / End Locations</a>
            </div>
            <div class="map">
              <svg class="canvas" viewBox="1627 708 2143 1356" role="img" aria-label="Route map">
                <rect x="1627" y="708" width="2143" height="1356" fill="#e5e3de" />
                <polygon v-for="(p, i) in light" :key="'l' + i" :points="p" fill="#ebe9e0" />
                <polygon v-for="(p, i) in urban" :key="'u' + i" :points="p" fill="#e5e3de" />
                <polygon v-for="(p, i) in islands" :key="'i' + i" :points="p" fill="#ebe9e0" />
                <polygon v-for="(p, i) in park" :key="'p' + i" :points="p" fill="#ebdcdf" />
                <g fill="none" stroke="#b4b6b8" stroke-width="9"><polyline :points="nw('115 920 115 1203')" /><polyline :points="nw('38 1190 170 1080')" /></g>
                <polygon v-for="(p, i) in water" :key="'w' + i" :points="p" fill="#89bbe6" />
                <polygon v-for="(p, i) in sandbars" :key="'sb' + i" :points="p" fill="#e8e5dd" />
                <polyline :points="bigRiver" fill="none" stroke="#89bbe6" stroke-width="15" stroke-linejoin="round" />
                <g fill="none" stroke-linejoin="round">
                  <polyline v-for="(p, i) in streams" :key="'s' + i" :points="p" stroke="#89bbe6" stroke-width="3" />
                  <polyline v-for="(p, i) in minorRoads" :key="'m' + i" :points="p" stroke="#cbc9c5" stroke-width="2" />
                  <polyline v-for="(p, i) in boundaries" :key="'b' + i" :points="p" stroke="#a09d99" stroke-width="2" stroke-dasharray="12 6" />
                  <polyline v-for="(p, i) in paleRoads" :key="'pe' + i" :points="p" stroke="#cfd0a8" stroke-width="7" />
                  <polyline v-for="(p, i) in paleRoads" :key="'p2' + i" :points="p" stroke="#f8f9d2" stroke-width="5" />
                  <polyline v-for="(p, i) in ramps" :key="'rp' + i" :points="p" stroke="#f0c070" stroke-width="2" />
                  <polyline v-for="(p, i) in yellowRoads" :key="'ye' + i" :points="p" stroke="#e6a955" stroke-width="9" />
                  <polyline v-for="(p, i) in yellowRoads" :key="'y' + i" :points="p" stroke="#fed16c" stroke-width="6" />
                  <polyline v-for="(p, i) in redRamps" :key="'rr' + i" :points="p" stroke="#e0685c" stroke-width="2" />
                  <polyline v-for="(p, i) in redRoads" :key="'re' + i" :points="p" stroke="#d8695b" stroke-width="10" />
                  <polyline v-for="(p, i) in redRoads" :key="'r' + i" :points="p" stroke="#f28574" stroke-width="7" />
                </g>
                <g class="labels">
                  <text v-for="l in labels" :key="l.lines[0]" :x="l.x" :y="l.y" :class="l.k">
                    <tspan v-for="(t, j) in l.lines" :key="t" :x="l.x" :dy="j ? 21 : 6">{{ t }}</tspan>
                  </text>
                  <text class="river" transform="translate(1857 1776) rotate(-57)">Coosa River</text>
                  <text class="river" transform="translate(2444 1512) rotate(41)">Coosa River</text>
                </g>
                <g v-for="(s, i) in shields" :key="'sh' + i" :transform="`translate(${s.x} ${s.y})`" class="shield">
                  <path v-if="s.k === 'us'" d="M-16-15Q-10-11 0-15 10-11 16-15L21-10Q16-4 20 2 22 10 14 13 6 12 0 16-6 12-14 13-22 10-20 2-16-4-21-10Z" fill="#fff" stroke="#55545c" stroke-width="2" />
                  <circle v-else-if="s.k === 'st'" r="16" fill="#fff" stroke="#55545c" stroke-width="2" />
                  <g v-else stroke="#fff" stroke-width="2"><path d="M-19-6H19Q22 8 0 16-22 8-19-6Z" fill="#4f7fb8" /><path d="M-18-14Q0-10 18-14L19-6H-19Z" fill="#c8473f" /></g>
                  <text y="6" :class="{ inv: s.k === 'is' }">{{ s.n }}</text>
                </g>
                <g fill="none" stroke="#0a6ef5" stroke-width="13" stroke-linejoin="round">
                  <polyline v-for="(p, i) in routes" :key="'ro' + i" :points="p" opacity=".66" />
                  <polyline v-for="(p, i) in mainRoutes" :key="'mr' + i" :points="p" opacity=".88" />
                </g>
                <g stroke-linejoin="round" fill="none" stroke="#456" stroke-width="5" opacity=".3">
                  <polyline :points="nw('1083 950 1040 1020 960 1110 900 1200 860 1245 735 1400')" />
                  <polyline :points="nw('1103 700 1103 800 1095 860')" />
                  <polyline :points="ne('100 915 150 990 260 1200')" /><polyline :points="ne('960 865 990 857 1130 855')" />
                  <polyline :points="sw('610 75 576 85 520 120 470 200 405 340 330 400 220 435 110 535 70 610 38 655')" />
                </g>
                <g v-for="m in markers" :key="'k' + m.n" :transform="`translate(${m.x} ${m.y})`" class="marker">
                  <circle r="27" :fill="m.c" /><circle r="14" fill="#fff" /><text y="6" :class="{ dim: m.n === '4' }">{{ m.n }}</text>
                </g>
                <g>
                  <ellipse cx="2392" cy="1436" rx="18" ry="3" fill="#8a8a88" opacity=".6" /><ellipse cx="2439" cy="1436" rx="18" ry="3" fill="#8a8a88" opacity=".6" />
                  <path d="M2370 1363q0-5 5-5h50q5 0 5 5v4h16q10 0 13 10l2 14v28h-91Z" fill="#7bbd1e" />
                  <path d="M2371 1377h57v24h-57Z" fill="#d8d8db" /><path d="M2430 1367v51" stroke="#64a512" />
                  <path d="M2435 1380q0-4 4-4h11q5 0 5 6v13q0 3-3 3h-17Z" fill="#2f80d8" stroke="#24486e" stroke-width="2" />
                  <path d="M2370 1418h91v9h-91Z" fill="#4b4e55" /><path d="M2449 1411h14v7h-11Z" fill="#ffb52b" />
                  <g fill="#3a3e48" stroke="#2a2d34" stroke-width="2"><circle cx="2392" cy="1423" r="11" /><circle cx="2439" cy="1423" r="11" /></g>
                  <circle cx="2392" cy="1423" r="5" fill="#a4acb8" /><circle cx="2439" cy="1423" r="5" fill="#a4acb8" />
                </g>
                <path d="M2388 924l-5-9q-2-4 1-5 3 0 4 4l2 4-1-13q0-3 3-3 2 0 3 3l1 8 1-11q1-3 3-2 2 0 2 3v10l3-8q2-3 4-1 1 1 0 4l-2 12q-1 5-3 8v3h-12v-3Z" fill="#fff" stroke="#222" stroke-width="2" stroke-linejoin="round" />
                <g class="logo">
                  <path d="M3572 2004q0-4 4-2l22 9q3 2 0 4l-22 9q-4 2-4-2Z" fill="#0d4f97" /><circle cx="3582" cy="2013" r="8" fill="#e9f1f8" /><path d="M3574 2013h16M3582 2005v16M3577 2006l10 14M3587 2006l-10 14" stroke="#0d4f97" stroke-width="2" />
                  <text x="3594" y="2021">Trimble</text><text x="3671" y="2021" class="maps">MAPS</text>
                </g>
              </svg>
              <div class="ctl ctl-draw">
                <button aria-label="Select area"><svg viewBox="0 0 24 24" v-html="icons.select"></svg></button>
                <button aria-label="Delete"><svg viewBox="0 0 24 24" v-html="icons.trash"></svg></button>
              </div>
              <div class="ctl-stack">
                <div class="ctl">
                  <button aria-label="Zoom in"><svg viewBox="0 0 24 24" v-html="icons.plus"></svg></button>
                  <button aria-label="Zoom out"><svg viewBox="0 0 24 24" v-html="icons.minus"></svg></button>
                  <button class="big" aria-label="Reset north"><svg viewBox="0 0 24 24" v-html="icons.compass"></svg></button>
                </div>
                <div class="ctl"><button aria-label="Locate"><svg viewBox="0 0 24 24" v-html="icons.locate"></svg></button></div>
              </div>
            </div>
          </div>
        </section>
      </div>
    </main>

    <button class="help" aria-label="Help"><svg viewBox="0 0 24 24" v-html="icons.help"></svg></button>
    <button class="chat" aria-label="Chat"><svg viewBox="0 0 24 24" v-html="icons.chat"></svg><span class="badge">1</span></button>
    <div class="page-scroll"><div></div></div>
  </div>
</template>

<style>
body { margin: 0; background: #f5f5f6; }
</style>

<style scoped>
.app { display: grid; grid-template-columns: 466px minmax(0, 1fr); height: 100vh; overflow: hidden; background: #f5f5f6; color: #181c26; font: 400 22px/32px Inter, sans-serif; position: relative; }
.app * { box-sizing: border-box; }
button, input, select { font: inherit; color: inherit; margin: 0; }
button { cursor: pointer; border: 0; padding: 0; background: none; }
a { text-decoration: none; color: inherit; }
ul, ol { list-style: none; margin: 0; padding: 0; }
p, h1, h2 { margin: 0; font-weight: 400; }
svg { display: block; flex: none; }
.caret { display: inline-block; border: 5px solid transparent; border-top: 7px solid currentColor; border-bottom: 0; vertical-align: 4px; margin-left: 5px; }

.sidebar { background: #1e243b; color: #8c91a1; overflow: hidden; font-size: 21px; }
.brand { height: 106px; padding: 0 16px 0 34px; display: flex; align-items: center; justify-content: space-between; border-bottom: 2px dashed #363c51; }
.brand-name { color: #fff; font-size: 31px; font-weight: 500; white-space: nowrap; }
.collapse { width: 58px; height: 62px; border-radius: 8px; background: #2b3148; display: grid; place-items: center; color: #fff; }
.collapse svg { width: 30px; height: 30px; }
.menu { display: grid; grid-auto-rows: 1fr; }
.menu-top { height: 480px; margin-top: 12px; }
.menu-lower { height: 1096px; margin-top: 17px; }
.menu a { display: flex; align-items: center; height: 100%; padding: 0 43px 0 48px; }
.menu .mi { width: 34px; height: 29px; margin-right: 14px; }
.menu .chev { width: 26px; height: 26px; margin-left: auto; color: #3f5573; }
.menu .open, .menu .open .chev { color: #fff; }
.submenu { margin-top: 8px; padding: 0 57px 0 66px; display: grid; grid-auto-rows: 61px; align-items: center; }
.submenu a { height: 54px; padding-left: 14px; display: flex; align-items: center; gap: 11px; border-radius: 10px; }
.submenu svg { width: 24px; height: 22px; }
.submenu svg.narrow { width: 20px; }
.submenu .active { background: #7bbd1e; color: #fff; }

.main { min-width: 0; }
.topbar { height: 100px; background: #fff; box-shadow: 0 6px 60px rgba(20, 20, 40, .14); display: flex; align-items: center; padding: 0 42px 8px 28px; color: #555b6b; position: relative; }
.topbar h1 { font-size: 26px; margin-left: 12px; }
.top-cal { width: 29px; height: 32px; color: #7a7f92; }
.top-actions { margin-left: auto; display: flex; gap: 39px; margin-top: 8px; color: #8a8f9c; }
.top-actions svg { width: 28px; height: 26px; }
.content { padding: 0 31px 0 26px; }
.crumb { margin-top: 24px; margin-bottom: 58px; }
.tabs { height: 96px; background: #2a334a; border-radius: 10px; padding: 13px 12px; display: flex; gap: 6px; color: #fff; font-weight: 500; font-size: 21px; }
.tabs a { height: 64px; line-height: 64px; padding: 0 25px; border-radius: 10px; white-space: nowrap; }
.tabs .active { background: #7bbd1e; font-weight: 700; }
.card { background: #fff; border-radius: 16px; box-shadow: 0 0 40px rgba(40, 40, 60, .05); }
.filters { margin-top: 26px; padding: 26px; }
.view-row { display: flex; justify-content: flex-end; }
.view-group { display: flex; width: 214px; height: 64px; padding-left: 4px; background: #646975; border-radius: 8px; color: #fff; }
.view-group button { flex: 1; display: grid; place-items: center; }
.view-group svg { width: 24px; height: 24px; }
.filters h2 { text-align: center; font-size: 24px; line-height: 34px; font-weight: 700; margin-bottom: 24px; }
.filter-row { display: flex; height: 64px; color: #40444f; }
.select { flex: 0 1 544px; margin-right: 14px; position: relative; }
.select select { width: 100%; height: 100%; appearance: none; background: #fff; border: 2px solid #ccd0d6; border-radius: 8px; padding: 0 18px; font-size: 24px; }
.select.native select { padding: 8px 10px 0; }
.select .caret { position: absolute; right: 11px; top: 29px; pointer-events: none; }
.pager { margin-left: auto; display: flex; width: 125px; border: 2px solid #ccd0d6; border-radius: 8px; background: #ebecf1; color: #5f6473; }
.pager button { flex: 1; display: grid; place-items: center; }
.pager button + button { border-left: 2px solid #ccd0d6; }
.pager svg { width: 24px; height: 22px; }
.today { width: 111px; margin: 0 13px 0 8px; border: 2px solid #ccd0d6; border-radius: 8px; background: #ebecf1; color: #777b8c; font-size: 21px; }
.range { width: 370px; border: 2px solid #ccd0d6; border-radius: 8px; background: #fff; color: #23262f; display: flex; align-items: center; justify-content: center; gap: 5px; white-space: nowrap; }
.range svg { width: 26px; height: 28px; }

.planner { margin-top: 51px; padding: 33px 39px; min-height: 1600px; display: grid; grid-template-columns: minmax(0, 1048fr) minmax(0, 2143fr); gap: 48px; align-items: start; }
.actions { display: flex; gap: 20px; font-size: 21px; }
.btn { height: 64px; padding: 0 24px; border: 2px solid #ccd0d6; border-radius: 8px; background: #ebecf1; color: #6a6e7d; display: flex; align-items: center; white-space: nowrap; }
.btn.green { background: #7bbd1e; border-color: #7bbd1e; color: #fff; font-weight: 500; padding: 0 22px; }
.btn svg { width: 22px; height: 22px; margin-right: 6px; }
.fields { display: grid; grid-template-columns: 1fr 1fr; gap: 27px; margin: 39px 2px 53px; font-size: 21px; }
.field { display: flex; height: 63px; border: 2px solid #ccd0d6; border-radius: 8px; overflow: hidden; }
.field label { padding: 0 18px; line-height: 59px; background: #f6f6f9; border-right: 2px solid #ccd0d6; color: #747887; white-space: nowrap; }
.field input { flex: 1; min-width: 0; border: 0; padding: 0 19px; font-size: 24px; color: #40444f; outline: none; }
.hint { margin: 0 2px 9px; }
.swatches { display: grid; grid-template-columns: repeat(6, 1fr); gap: 17px; margin: 0 12px 0 2px; min-height: 128px; }
.swatches label { text-align: center; }
.swatches input { display: block; width: 100%; height: 61px; margin-bottom: 3px; border: 0; padding: 0; background: none; }
.swatches input::-webkit-color-swatch-wrapper { padding: 0; }
.swatches input::-webkit-color-swatch { border: 0; border-radius: 8px; }
.swatches span { display: block; margin: 0 -4px; }
input[type="checkbox"] { appearance: none; flex: none; width: 23px; height: 23px; border: 2px solid #8cc63f; border-radius: 4px; background: #fff; display: grid; place-items: center; }
input[type="checkbox"]:checked::after { content: ""; width: 13px; height: 13px; border-radius: 3px; background: #7bbd1e; }
.apply { display: flex; align-items: center; gap: 16px; margin: 26px 0 51px; color: #565b69; }
.list-head { display: flex; align-items: center; gap: 8px; height: 83px; padding-left: 5px; background: #f5f6fa; font-weight: 700; font-size: 23px; margin-bottom: 15px; }
.list { display: flex; justify-content: space-between; }
.list ol { display: grid; grid-auto-rows: 1fr; height: 867px; }
.list li { display: flex; align-items: center; padding-left: 5px; color: #565b69; white-space: nowrap; }
.num { width: 48px; height: 48px; border-radius: 50%; background: #0070ff; color: #fff; text-align: center; line-height: 48px; font-size: 23px; margin-right: 6px; }
.list label { display: flex; align-items: center; gap: 16px; }
.list li svg { width: 24px; height: 24px; margin-left: 12px; }
.bar { width: 5px; background: #d9dce0; }
.thumb { width: 5px; height: 318px; background: #4d5260; }

.layers { height: 28px; display: flex; align-items: center; margin-bottom: 22px; color: #565b69; font-family: "Liberation Sans", sans-serif; white-space: nowrap; }
.layers label { display: flex; align-items: center; gap: 8px; margin-right: 18px; }
.layers .sep { width: 2px; height: 28px; background: #23262f; }
.layers a { color: #7bbd1e; margin-left: 26px; font-size: 23px; }
.map { position: relative; overflow: hidden; }
.canvas { width: 100%; height: auto; }
.map::after { content: ""; position: absolute; inset: 0; border: solid #0b4fb3; border-width: 4px 2px 0; pointer-events: none; border-radius: 4px 4px 0 0; }
.labels text, .shield text, .marker text { text-anchor: middle; font-family: Roboto, sans-serif; }
.labels text { font-size: 18px; fill: #55545c; paint-order: stroke; stroke: #fbfaf7; stroke-width: 3px; }
.labels .town { fill: #23222a; }
.labels .city { fill: #23222a; font-size: 24px; }
.labels .river { fill: #5479a6; stroke: #a9cdec; }
.shield text { font-size: 17px; font-weight: 500; fill: #2d2c33; }
.shield .inv { fill: #fff; }
.marker text { font-size: 17px; font-weight: 500; fill: #2d2c33; }
.marker .dim { fill: #8d8d90; }
.logo text { font: 700 22px Roboto, sans-serif; fill: #0d4f97; paint-order: stroke; stroke: #fff; stroke-width: 3px; }
.logo .maps { font-style: italic; fill: #2f7fd0; }
.ctl { background: #fff; border-radius: 6px; box-shadow: 0 0 0 3px rgba(0, 0, 0, .12); }
.ctl button { width: 48px; height: 49px; display: grid; place-items: center; }
.ctl button + button { border-top: 2px solid #dddde2; }
.ctl svg { width: 26px; height: 26px; }
.ctl .big svg { width: 32px; height: 32px; }
.ctl-draw { position: absolute; left: 16px; top: 13px; }
.ctl-stack { position: absolute; right: 15px; top: 13px; display: grid; gap: 15px; }

.help { position: absolute; right: 4px; top: 1785px; width: 75px; height: 82px; padding-left: 4px; background: #f23a2c; border-radius: 8px 0 0 8px; display: grid; place-items: center; }
.help svg { width: 34px; height: 34px; }
.chat { position: absolute; right: 45px; bottom: 41px; width: 96px; height: 96px; border-radius: 28px; background: #7bbd1e; display: grid; place-items: center; box-shadow: 0 2px 8px rgba(0, 0, 0, .2); }
.chat svg { width: 48px; height: 48px; }
.badge { position: absolute; right: -9px; top: -9px; width: 32px; height: 32px; border-radius: 50%; background: #e8124f; color: #fff; font-size: 17px; font-weight: 600; line-height: 32px; }
.page-scroll { position: absolute; right: 0; top: 0; width: 4px; height: 100%; background: #c9ccd2; }
.page-scroll div { height: 479px; background: #4a5064; }
</style>
